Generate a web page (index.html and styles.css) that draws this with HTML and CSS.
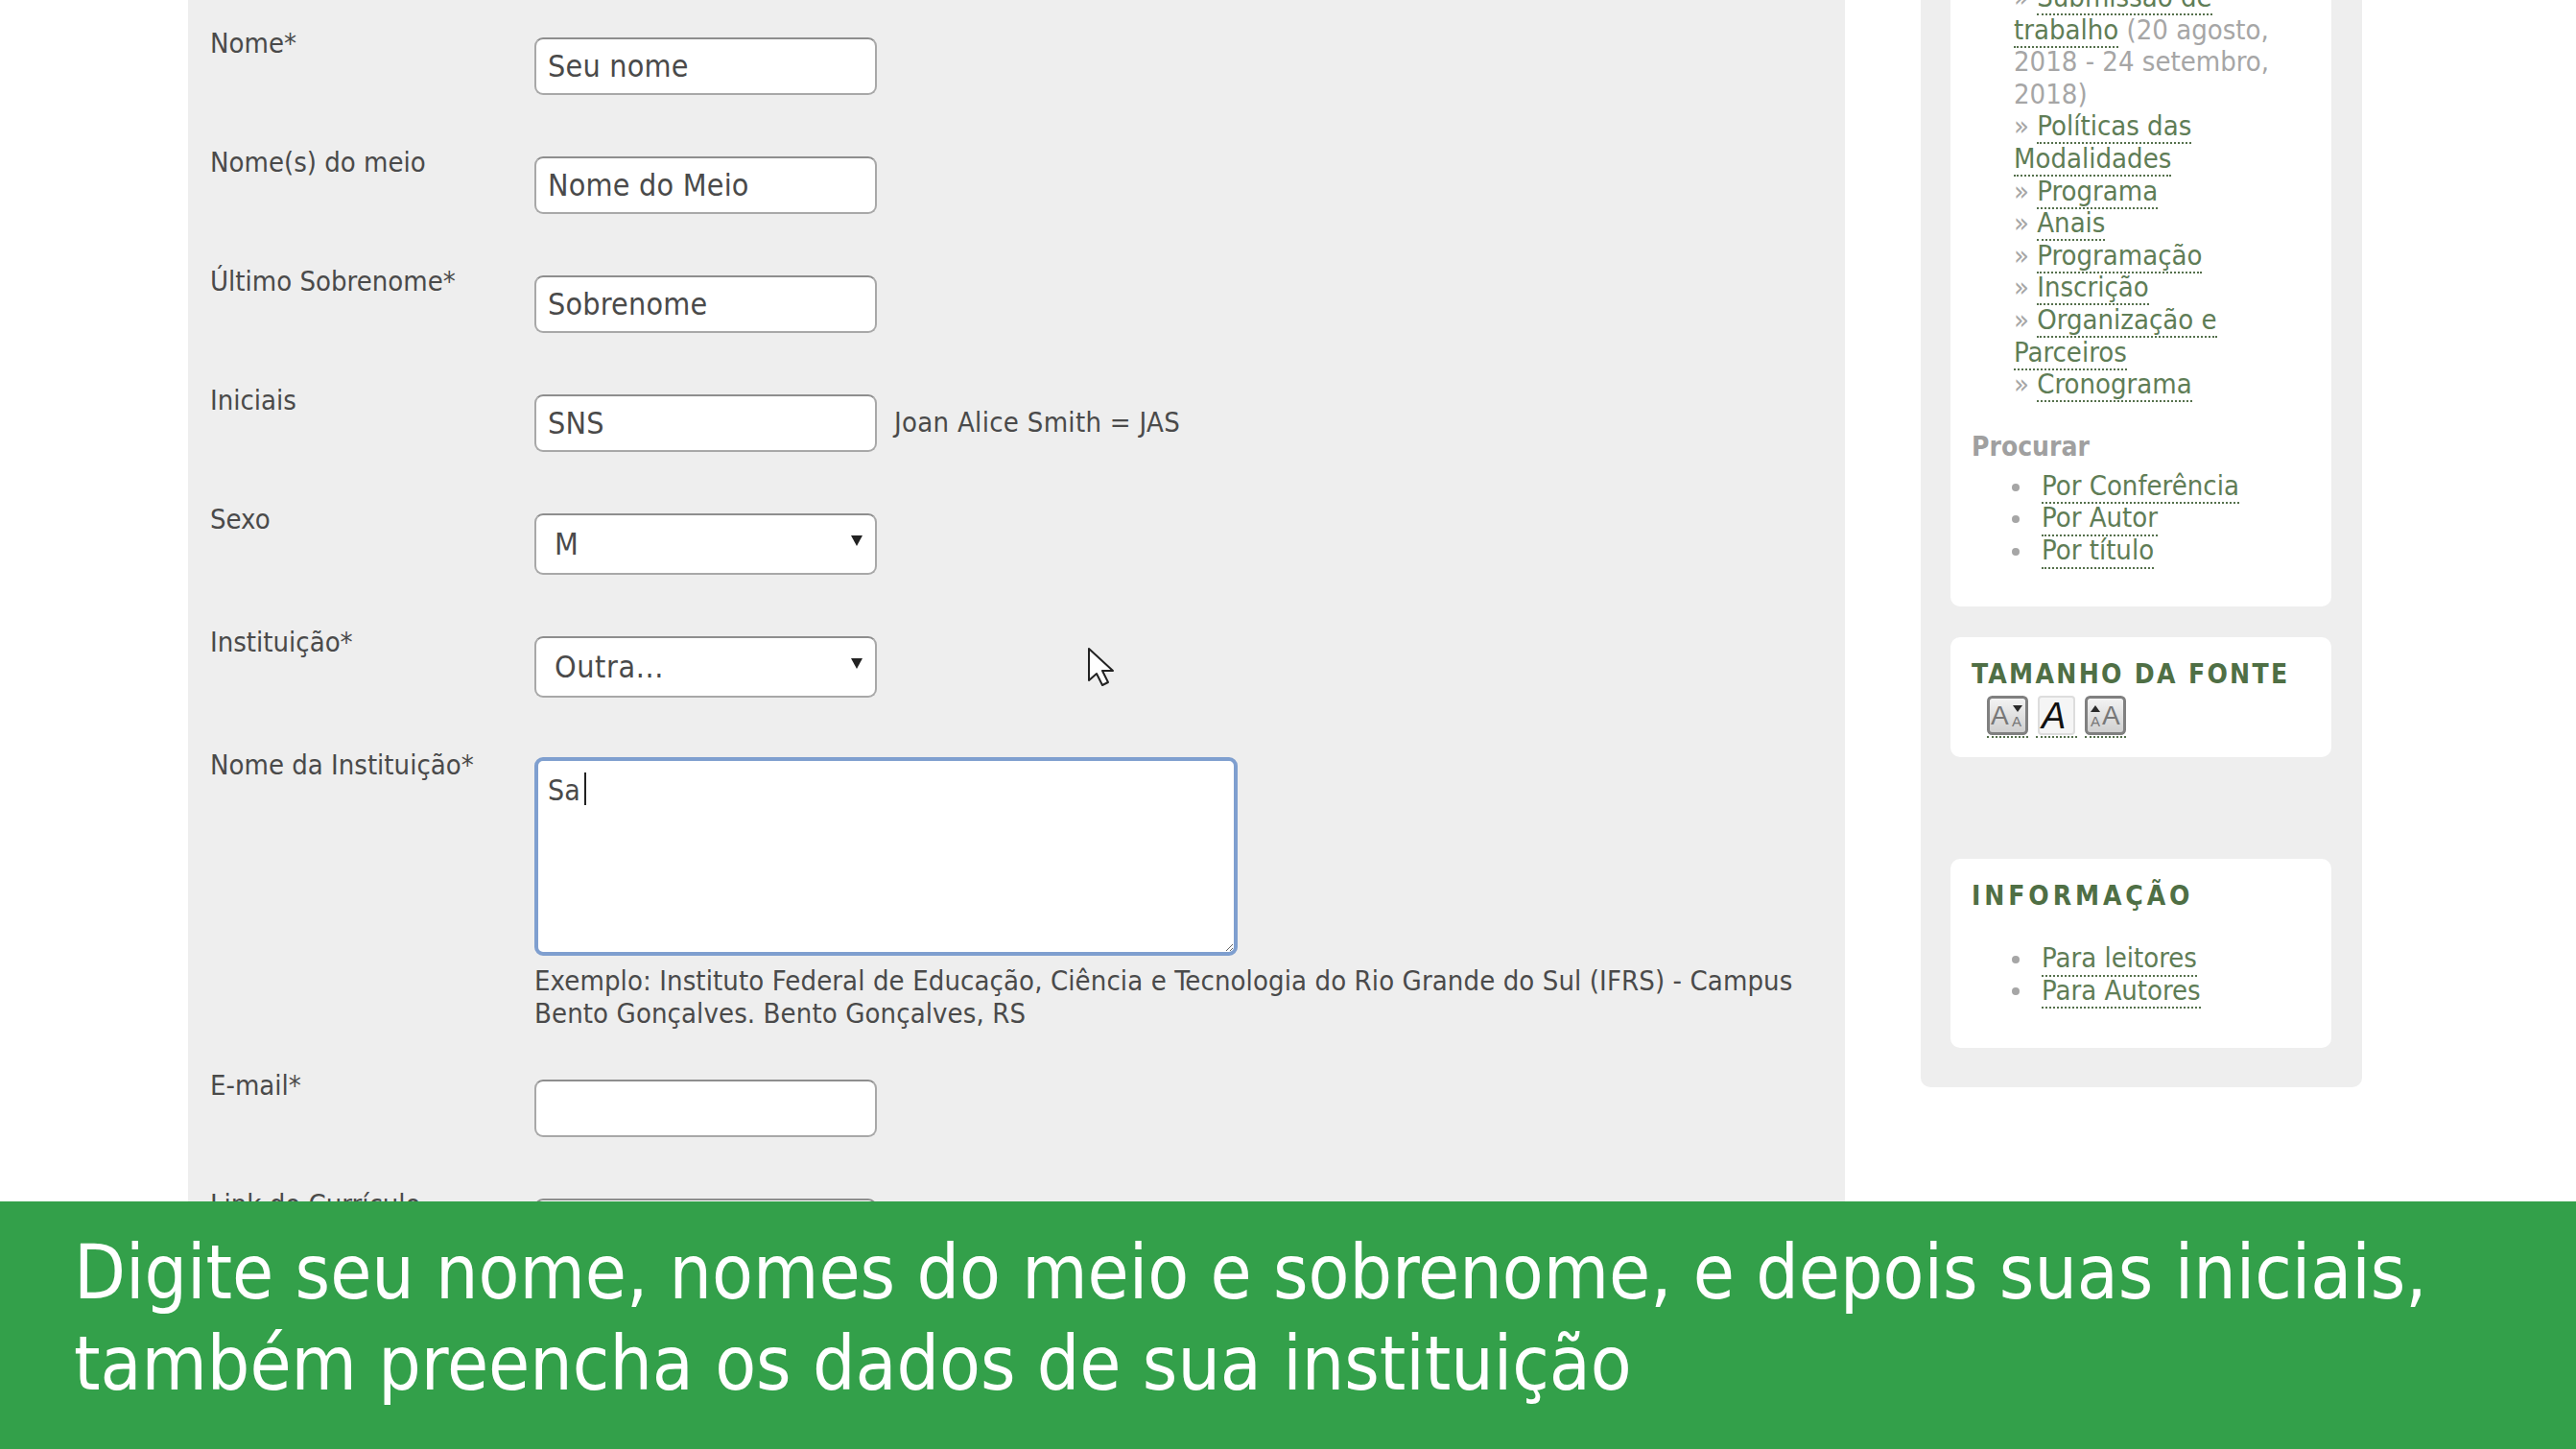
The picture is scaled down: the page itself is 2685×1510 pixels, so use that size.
FILE: index.html
```html
<!DOCTYPE html>
<html lang="pt-BR">
<head>
  <meta charset="UTF-8">
  <title>Cadastro</title>
  <link rel="stylesheet" href="styles.css">
</head>
<body>
  <div class="screen">
    <div class="page">
      <!-- form -->
      <main class="form-panel">
        <div class="row"><label>Nome*</label><div class="field"><input type="text" value="Seu nome"></div></div>
        <div class="row"><label>Nome(s) do meio</label><div class="field"><input type="text" value="Nome do Meio"></div></div>
        <div class="row"><label>Último Sobrenome*</label><div class="field"><input type="text" value="Sobrenome"></div></div>
        <div class="row"><label>Iniciais</label><div class="field"><input type="text" value="SNS"><span class="hint">Joan Alice Smith = JAS</span></div></div>
        <div class="row row-select"><label>Sexo</label><div class="field"><div class="select-wrap"><select><option>M</option></select></div></div></div>
        <div class="row row-select"><label>Instituição*</label><div class="field"><div class="select-wrap"><select><option>Outra...</option></select></div></div></div>
        <div class="row row-area">
          <label>Nome da Instituição*</label>
          <div class="field field-area">
            <div class="area-wrap"><textarea>Sa</textarea><span class="caret"></span></div>
            <p class="help">Exemplo: Instituto Federal de Educação, Ciência e Tecnologia do Rio Grande do Sul (IFRS) - Campus Bento Gonçalves. Bento Gonçalves, RS</p>
          </div>
        </div>
        <div class="row"><label>E-mail*</label><div class="field"><input type="text"></div></div>
        <div class="row"><label>Link do Currículo</label><div class="field"><input type="text"></div></div>
        <svg class="pointer" width="30" height="42" viewBox="0 0 30 42"><path d="M2 2v33l8-7 6 12 6-3-6-12h11z" fill="#fff" stroke="#222" stroke-width="2" stroke-linejoin="round"/></svg>
      </main>

      <!-- sidebar -->
      <aside class="sidebar">
        <section class="card card-nav">
          <ul class="nav-list">
            <li>» <a href="#">Submissão de trabalho</a> (20 agosto, 2018 - 24 setembro, 2018)</li>
            <li>» <a href="#">Políticas das Modalidades</a></li>
            <li>» <a href="#">Programa</a></li>
            <li>» <a href="#">Anais</a></li>
            <li>» <a href="#">Programação</a></li>
            <li>» <a href="#">Inscrição</a></li>
            <li>» <a href="#">Organização e Parceiros</a></li>
            <li>» <a href="#">Cronograma</a></li>
          </ul>
          <h4>Procurar</h4>
          <ul class="bullets">
            <li><a href="#">Por Conferência</a></li>
            <li><a href="#">Por Autor</a></li>
            <li><a href="#">Por título</a></li>
          </ul>
        </section>
        <section class="card card-font">
          <h3>Tamanho da fonte</h3>
          <div class="font-icons">
            <a href="#"><svg width="43" height="42" viewBox="0 0 43 42"><defs><linearGradient id="btn" x1="0" y1="0" x2="0" y2="1"><stop offset="0" stop-color="#f4f4f4"/><stop offset="1" stop-color="#cfcfcf"/></linearGradient></defs><rect x="1.5" y="1.5" width="40" height="38" rx="4" fill="url(#btn)" stroke="#808080" stroke-width="3"/><text x="4" y="30" class="icon-big">A</text><text x="26" y="32" class="icon-small">A</text><path d="M27 10h10l-5 7z" fill="#2a2a2a"/></svg></a>
            <a href="#"><svg width="43" height="42" viewBox="0 0 43 42"><rect x="3" y="1" width="37" height="39" rx="3" fill="#f5f5f5" stroke="#ddd" stroke-width="2"/><text x="6" y="34" class="icon-main">A</text></svg></a>
            <a href="#"><svg width="43" height="42" viewBox="0 0 43 42"><rect x="1.5" y="1.5" width="40" height="38" rx="4" fill="url(#btn)" stroke="#808080" stroke-width="3"/><text x="18" y="30" class="icon-big">A</text><text x="6" y="32" class="icon-small">A</text><path d="M6 17h10l-5-7z" fill="#2a2a2a"/></svg></a>
          </div>
        </section>
        <section class="card card-info">
          <h3>Informação</h3>
          <ul class="bullets">
            <li><a href="#">Para leitores</a></li>
            <li><a href="#">Para Autores</a></li>
          </ul>
        </section>
      </aside>
    </div>

    <footer class="caption">Digite seu nome, nomes do meio e sobrenome, e depois suas iniciais, também preencha os dados de sua instituição</footer>
  </div>
</body>
</html>
```

FILE: styles.css
```css
* { box-sizing: border-box; }
html, body { margin: 0; padding: 0; background: #fff; }
body { font-family: "DejaVu Sans Condensed", "Noto Sans", sans-serif; font-size: 29px; line-height: 33.6px; color: #4a4a4a; }
.screen { width: 2685px; height: 1510px; overflow: hidden; display: flex; flex-direction: column; }
.page { height: 1252px; overflow: hidden; display: flex; gap: 79px; padding-left: 196px; flex: none; }

.form-panel { width: 1727px; background: #eee; padding: 29px 23px 0; position: relative; flex: none; }
.row { display: grid; grid-template-columns: 338px 1fr; height: 124px; }
.row-select { height: 128px; }
.row-area { height: 334px; }
.row label { display: block; }
.field { padding-top: 10px; display: flex; align-items: center; gap: 18px; height: 70px; }
input, select, textarea { font: inherit; color: #4a4a4a; background: #fff; border: 2px solid #a8a8a8; border-top-color: #8e8e8e; border-radius: 9px; }
input { width: 357px; height: 60px; padding: 0 12px; font-size: 32px; letter-spacing: .2px; }
.hint { white-space: nowrap; letter-spacing: .3px; }
.select-wrap { position: relative; width: 357px; }
.select-wrap::after { content: ""; position: absolute; right: 15px; top: 23px; border-left: 6px solid transparent; border-right: 6px solid transparent; border-top: 11px solid #222; }
select { width: 100%; height: 64px; padding: 2px 18px 0 19px; appearance: none; font-size: 32px; letter-spacing: .6px; }
.row-select .field { height: 74px; }
.field-area { display: block; height: auto; padding-top: 8px; }
.area-wrap { position: relative; width: 733px; height: 207px; }
textarea { display: block; width: 100%; height: 100%; padding: 14px 10px; border: 4px solid #7f9fcf; outline: none; font-size: 30px; }
.caret { position: absolute; left: 52px; top: 16px; width: 2px; height: 34px; background: #222; }
.help { margin: 10px 0 0; letter-spacing: .1px; }
.pointer { position: absolute; left: 937px; top: 674px; }

.sidebar { width: 460px; height: 1133px; background: #eee; border-radius: 0 0 10px 10px; padding: 0 32px 0 31px; flex: none; }
.card { background: #fff; border-radius: 10px; padding: 0 22px; }
.card-nav { height: 632px; padding-top: 0; margin-bottom: 32px; overflow: hidden; border-radius: 0 0 10px 10px; }
.nav-list { list-style: none; margin: -19px 0 0; padding: 0 20px 0 44px; color: #a6a6a6; }
a { color: #5f7d56; text-decoration: none; border-bottom: 2px dotted #55704c; }
h4 { margin: 31px 0 0; font-size: 28px; line-height: 34px; color: #a0a0a0; }
.bullets { list-style: none; margin: 8px 0 0; padding: 0 0 0 42px; }
.bullets li { display: flex; align-items: center; gap: 23px; height: 33.6px; }
.bullets li::before { content: ""; width: 8px; height: 8px; border-radius: 50%; background: #a6a6a6; flex: none; }
.card-font { height: 125px; padding-top: 22px; margin-bottom: 106px; }
.card-info { height: 197px; padding-top: 22px; }
h3 { margin: 0; font-size: 28px; line-height: 34px; text-transform: uppercase; color: #4f6f45; }
.card-font h3 { letter-spacing: 2.3px; }
.card-info h3 { letter-spacing: 3.9px; }
.card-info .bullets { margin-top: 32px; }
.font-icons { display: flex; gap: 8px; padding-left: 16px; margin-top: 5px; }
.font-icons a { display: block; height: 44px; }
.font-icons svg { display: block; }
.icon-big { font: 28px "Liberation Sans", sans-serif; fill: #777; }
.icon-small { font: 15px "Liberation Sans", sans-serif; fill: #777; }
.icon-main { font: italic 38px "Liberation Sans", sans-serif; fill: #111; }

.caption { flex: 1; background: #33a04a; color: #fff; padding: 27px 60px 0 77px; font-size: 78px; line-height: 95px; }
```
